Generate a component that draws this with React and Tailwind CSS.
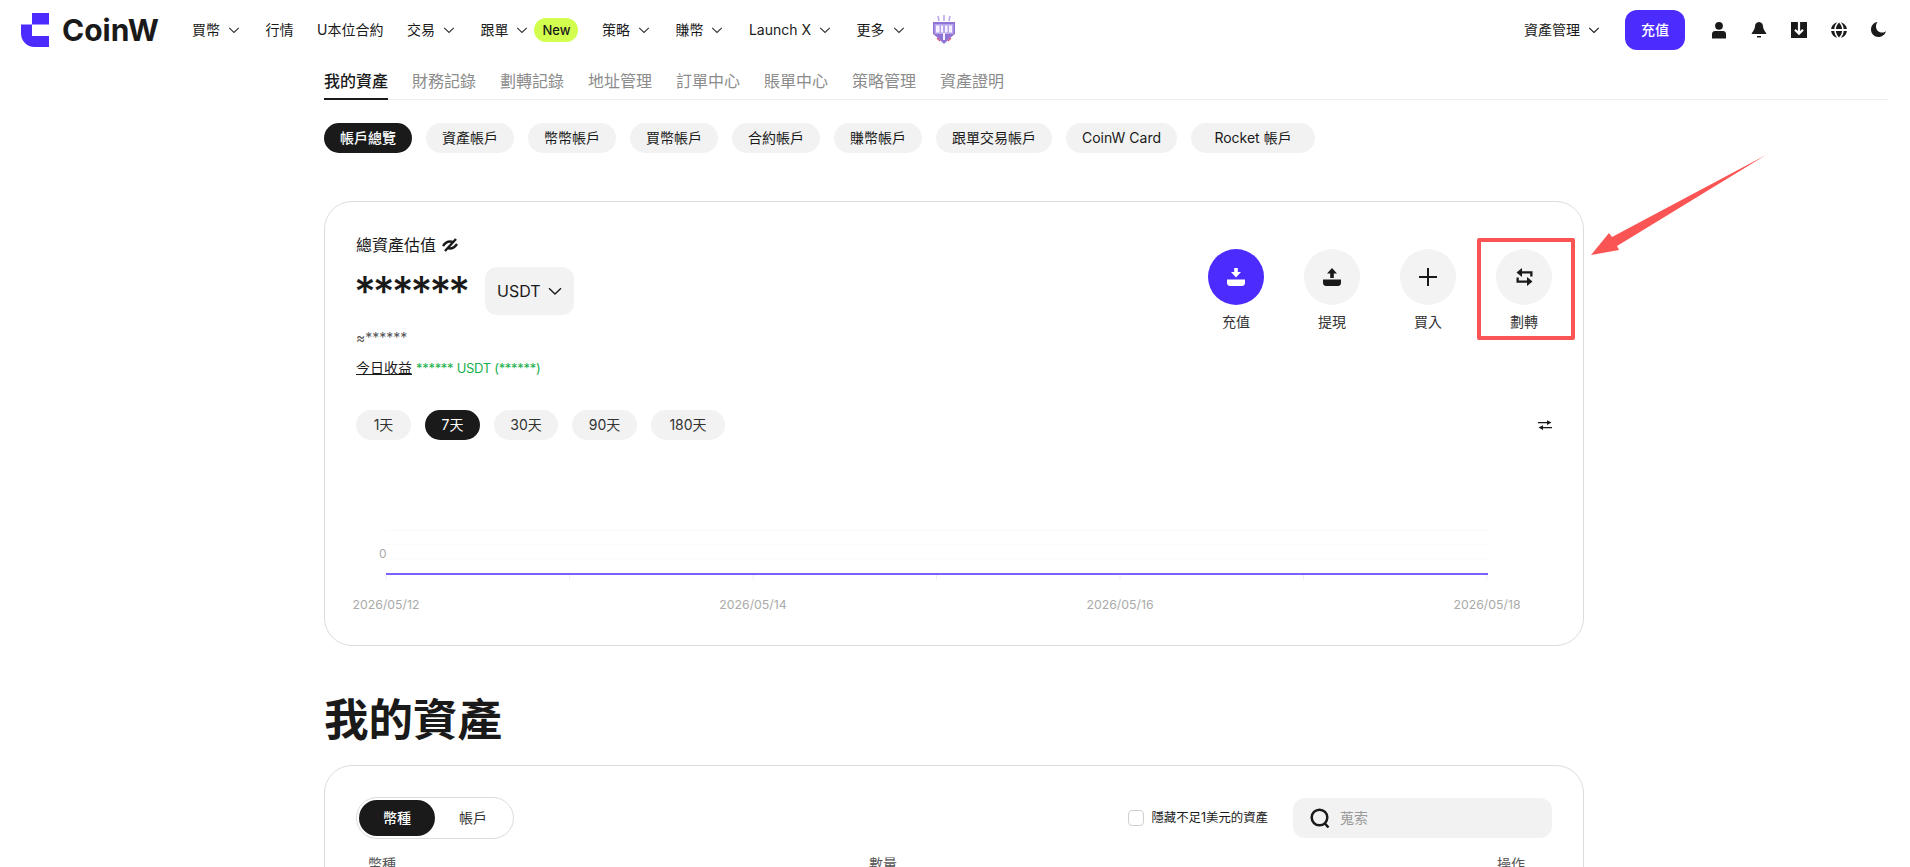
import React from "react";

const FONT = "font-['Inter','Noto_Sans_CJK_TC',sans-serif]";

const Chevron = ({ className = "w-4 h-4" }) => (
  <svg viewBox="0 0 16 16" className={className} fill="none" stroke="currentColor" strokeWidth="1.1">
    <path d="M3.2 5.8 8 10.4l4.8-4.6" />
  </svg>
);

const Logo = () => (
  <svg viewBox="0 0 28 34" className="w-[28px] h-[34px]" fill="#4c2bff">
    <path d="M11 0h17v11.5H11V23h17v11H13.5C6 34 0 28 0 20.5v-9h11z" />
  </svg>
);

// little purple badge next to the nav, it's a picture in the real site
const Emblem = () => (
  <svg viewBox="0 0 28 30" className="w-[28px] h-[30px]">
    <path d="M8 1l1 5M14 0v6M20 1l-1 5" stroke="#b9a5ea" strokeWidth="1.5" />
    <path d="M3 7h22v12l-5 4-6 6-6-6-5-4z" fill="#8f74d6" />
    <path d="M4.500 9h19v10h-19z" fill="#b7a4ea" />
    <path d="M6 10.500h3.500v7H6zM11 10.500h2v7h-2zM15 10.500h2.500v7H15zM19 10.500h3v7h-3z" fill="#f6f2ff" />
    <path d="M7 23l3 3M21 23l-3 3" stroke="#d0487a" strokeWidth="1.2" />
    <path d="M13 18h2v7h-2z" fill="#f6f2ff" />
  </svg>
);

const navItems = [
  { label: "買幣", arrow: true },
  { label: "行情" },
  { label: "U本位合約" },
  { label: "交易", arrow: true },
  { label: "跟單", arrow: true, badge: "New" },
  { label: "策略", arrow: true },
  { label: "賺幣", arrow: true },
  { label: "Launch X", arrow: true },
  { label: "更多", arrow: true },
];

const Header = () => (
  <header className="h-[60px] flex items-center pl-[21px] pr-[22px]">
    <div className="flex items-center gap-[13px] w-[171px]">
      <Logo />
      <span className="text-[30px] font-bold leading-none text-[#1a1a1a]">CoinW</span>
    </div>
    <nav className="flex items-center gap-[23.5px] text-sm text-[#1a1a1a]">
      {navItems.map((item) => (
        <div key={item.label} className="flex items-center">
          <span>{item.label}</span>
          {item.arrow && <Chevron className="w-4 h-4 ml-[6px] text-[#333]" />}
          {item.badge && (
            <span className="ml-[4px] w-[44px] h-[24px] rounded-full bg-[#d2ff4d] text-[13px] font-medium flex items-center justify-center">
              {item.badge}
            </span>
          )}
        </div>
      ))}
      <Emblem />
    </nav>
    <div className="ml-auto flex items-center text-[#1a1a1a]">
      <span className="text-sm">資產管理</span>
      <Chevron className="w-4 h-4 ml-[6px]" />
      <button className="ml-[23px] w-[60px] h-[40px] rounded-[12px] bg-[#4c2bff] text-white text-sm font-medium">充值</button>
      <div className="ml-[25px] flex items-center gap-[22px]">
        <svg viewBox="0 0 18 18" className="w-[18px] h-[18px]" fill="#1a1a1a">
          <circle cx="9" cy="4.800" r="3.900" />
          <path d="M2 13c0-1.700 1.300-3 3-3h8c1.700 0 3 1.300 3 3v4.500H2z" />
        </svg>
        <svg viewBox="0 0 18 18" className="w-[18px] h-[18px]" fill="#1a1a1a">
          <path d="M9 1c2.800 0 4 2.200 4 4.500 0 3 3 5.500 3.500 7.500h-15C2 11 5 8.500 5 5.500 5 3.200 6.200 1 9 1z" />
          <path d="M7 15h4v1.500H7z" />
        </svg>
        <svg viewBox="0 0 18 18" className="w-[18px] h-[18px]">
          <path d="M1 1h16v16H1z" fill="#1a1a1a" />
          <path d="M9 1v11.500M5 8.800l4 4 4-4" fill="none" stroke="#fff" strokeWidth="2.200" />
        </svg>
        <svg viewBox="0 0 18 18" className="w-[18px] h-[18px]" fill="#1a1a1a">
          <path d="M7.200 1.200C4 2 1.500 4.500 1.100 8h3.200c.2-2.700 1.300-5 2.900-6.800zM10.800 1.200C14 2 16.500 4.500 16.900 8h-3.200c-.2-2.700-1.300-5-2.900-6.800zM9 1.500C7.300 3.300 6.100 5.500 5.900 8h6.200C11.900 5.500 10.700 3.300 9 1.500z" />
          <path d="M7.200 16.800C4 16 1.500 13.500 1.100 10h3.200c.2 2.700 1.300 5 2.900 6.800zM10.800 16.800c3.200-.8 5.700-3.300 6.100-6.800h-3.200c-.2 2.700-1.300 5-2.900 6.800zM9 16.500c-1.700-1.800-2.900-4-3.100-6.500h6.200c-.2 2.500-1.400 4.700-3.100 6.500z" />
        </svg>
        <svg viewBox="0 0 18 18" className="w-[18px] h-[18px]" fill="#1a1a1a">
          <path d="M7.500 1C3.800 1.500 1 4.700 1 8.500 1 12.700 4.300 16 8.500 16c3.600 0 6.700-2.500 7.500-6-1 1-2.400 1.600-4 1.600-3.400 0-6-2.600-6-6 0-1.800.6-3.400 1.500-4.600z" />
        </svg>
      </div>
    </div>
  </header>
);

const tabs = ["我的資產", "財務記錄", "劃轉記錄", "地址管理", "訂單中心", "賬單中心", "策略管理", "資產證明"];
const subTabs = ["帳戶總覽", "資產帳戶", "幣幣帳戶", "買幣帳戶", "合約帳戶", "賺幣帳戶", "跟單交易帳戶", "CoinW Card"];
const ranges = [
  { label: "1天", width: "w-[55px]" },
  { label: "7天", width: "w-[55px]" },
  { label: "30天", width: "w-[64px]" },
  { label: "90天", width: "w-[65px]" },
  { label: "180天", width: "w-[74px]" },
];

const DepositIcon = ({ color }) => (
  <svg viewBox="0 0 18 18" className="w-[18px] h-[18px]" fill={color}>
    <path d="M7.200 0h3.600v4H14L9 9.500 4 4h3.200z" />
    <path d="M0 11.500h18v3c0 2-1 3.500-3 3.500H3c-2 0-3-1.500-3-3.500z" />
  </svg>
);

const WithdrawIcon = ({ color }) => (
  <svg viewBox="0 0 18 18" className="w-[18px] h-[18px]" fill={color}>
    <path d="M9 0l5 5.500h-3.200v4.500H7.200V5.500H4z" />
    <path d="M0 11.500h18v3c0 2-1 3.500-3 3.500H3c-2 0-3-1.500-3-3.500z" />
  </svg>
);

const PlusIcon = () => (
  <svg viewBox="0 0 18 18" className="w-[18px] h-[18px]" fill="#1a1a1a">
    <path d="M8 0h2v8h8v2h-8v8H8v-8H0V8h8z" />
  </svg>
);

const TransferIcon = () => (
  <svg viewBox="0 0 17 18" className="w-[17px] h-[18px]" fill="#1a1a1a">
    <path d="M6 0v3.300h10.500v5.200h-2.300V5.600H6V9L.5 4.500zM11 18v-3.300H.5V9.500h2.300v2.900H11V9l5.500 4.500z" />
  </svg>
);

const actions = [
  { label: "充值", icon: <DepositIcon color="#fff" />, main: true },
  { label: "提現", icon: <WithdrawIcon color="#1a1a1a" /> },
  { label: "買入", icon: <PlusIcon /> },
  { label: "劃轉", icon: <TransferIcon /> },
];

const Chart = () => {
  const ticks = [0, 1, 2, 3, 4, 5, 6];
  const labels = [
    { x: 61, text: "2026/05/12" },
    { x: 428, text: "2026/05/14" },
    { x: 795, text: "2026/05/16" },
    { x: 1162, text: "2026/05/18" },
  ];
  return (
    <svg viewBox="0 0 1195 180" className="w-[1195px] h-[180px] block">
      {[90, 104, 119].map((y) => (
        <line key={y} x1="61" x2="1163" y1={y} y2={y} stroke="#fafafa" />
      ))}
      {ticks.map((i) => (
        <line key={i} x1={61 + i * 183.5} x2={61 + i * 183.5} y1="134" y2="140" stroke="#f0f0f0" />
      ))}
      <text x="54" y="118" fontSize="12" fill="#aaaaaa">0</text>
      <line x1="61" x2="1163" y1="134" y2="134" stroke="#4c2bff" strokeWidth="1.500" />
      {labels.map((l) => (
        <text key={l.text} x={l.x} y="169" fontSize="12.300" fill="#aaaaaa" textAnchor="middle">{l.text}</text>
      ))}
    </svg>
  );
};

const OverviewCard = () => (
  <section className="mt-[48px] w-[1260px] h-[445px] border border-[#dcdcdc] rounded-[28px] px-[31px] pt-[31px]">
    <div className="flex justify-between">
      <div>
        <div className="flex items-center gap-[6px] h-[24px] text-base text-[#1a1a1a]">
          <span>總資產估值</span>
          <svg viewBox="0 0 16 16" className="w-4 h-4" fill="none" stroke="#1a1a1a" strokeWidth="2.400">
            <path d="M1 9c2-3 4-4.500 7-4.500 1 0 2 .2 3 .6M15 7c-2 3-4 4.500-7 4.500-1 0-2-.2-3-.6M3 14 14 2" />
          </svg>
        </div>
        <div className="mt-[10px] flex items-start">
          <span className="w-[129px] -ml-[2px] mr-[2px] text-[42px] leading-[50px] font-medium tracking-[-3px] text-[#1a1a1a]">******</span>
          <div className="w-[89px] h-[48px] rounded-[12px] bg-[#f2f2f2] flex items-center pl-[12px] text-base text-[#1a1a1a]">
            USDT
            <Chevron className="w-[20px] h-[20px] ml-[4px]" />
          </div>
        </div>
        <div className="mt-[11px] h-[20px] text-sm leading-5 text-[#555]">≈******</div>
        <div className="mt-[10px] h-[20px] text-sm leading-5">
          <span className="underline text-[#1a1a1a]">今日收益</span>
          <span className="ml-1 text-[13px] tracking-[-0.3px] text-[#17b04b]">****** USDT (******)</span>
        </div>
      </div>
      <div className="flex gap-[40px] pt-[16px]">
        {actions.map((a) => (
          <div key={a.label} className="w-[56px] flex flex-col items-center">
            <div className={`w-[56px] h-[56px] rounded-full flex items-center justify-center ${a.main ? "bg-[#4c2bff]" : "bg-[#f3f3f3]"}`}>
              {a.icon}
            </div>
            <span className="mt-[7px] text-sm leading-5 text-[#333]">{a.label}</span>
          </div>
        ))}
      </div>
    </div>
    <div className="mt-[32px] flex items-center justify-between">
      <div className="flex gap-[14px]">
        {ranges.map((r) => (
          <div
            key={r.label}
            className={`h-[30px] ${r.width} rounded-full flex items-center justify-center text-sm ${r.label === "7天" ? "bg-[#1a1a1a] text-white" : "bg-[#f2f2f2] text-[#333]"}`}
          >
            {r.label}
          </div>
        ))}
      </div>
      <svg viewBox="0 0 14 10" className="w-[14px] h-[10px]" fill="#1a1a1a">
        <path d="M0 2h9v1.200H0zM9 .2 13.500 2.600 9 5zM14 7H5v1.200h9zM5 5.200.5 7.600 5 10z" />
      </svg>
    </div>
    <div className="-ml-[31px]">
      <Chart />
    </div>
  </section>
);

const AssetsCard = () => (
  <section className="mt-[19px] w-[1260px] h-[300px] border border-[#dcdcdc] rounded-[28px] px-[31px] pt-[31px]">
    <div className="flex items-center">
      <div className="w-[158px] h-[42px] rounded-full border border-[#dcdcdc] flex items-center px-[2px] text-sm">
        <div className="w-[76px] h-[36px] rounded-full bg-[#1a1a1a] text-white font-medium flex items-center justify-center">幣種</div>
        <div className="w-[76px] text-center text-[#333]">帳戶</div>
      </div>
      <div className="ml-auto flex items-center">
        <span className="w-4 h-4 rounded-[4px] border border-[#cfcfcf]" />
        <span className="ml-[7px] text-[12.4px] text-[#1a1a1a]">隱藏不足1美元的資產</span>
        <div className="ml-[25px] w-[259px] h-[40px] rounded-[12px] bg-[#f2f2f2] flex items-center pl-[17px]">
          <svg viewBox="0 0 20 20" className="w-[20px] h-[20px]" fill="none" stroke="#1a1a1a" strokeWidth="2.500">
            <circle cx="9.500" cy="9.500" r="7.800" />
            <path d="m14.500 15 4 4.500" />
          </svg>
          <span className="ml-[10px] text-sm text-[#999]">蒐索</span>
        </div>
      </div>
    </div>
    <div className="mt-[15px] px-[12px] flex text-sm text-[#555]">
      <span className="w-[501px]">幣種</span>
      <span>數量</span>
      <span className="ml-auto mr-[15px]">操作</span>
    </div>
  </section>
);

export default function App() {
  return (
    <div className={`relative h-[867px] overflow-hidden bg-white ${FONT}`}>
      <Header />
      <main className="pl-[324px] pr-[22px]">
        <div className="h-[40px] flex gap-[24px] border-b border-[#efefef] text-base">
          {tabs.map((t, i) => (
            <div
              key={t}
              className={`h-[40px] pt-[9px] leading-6 ${i === 0 ? "border-b-2 border-[#1a1a1a] text-[#1a1a1a] font-medium" : "text-[#8c8c8c]"}`}
            >
              {t}
            </div>
          ))}
        </div>
        <div className="mt-[23px] flex gap-[14px]">
          {subTabs.map((t, i) => (
            <div
              key={t}
              className={`h-[30px] px-[16px] rounded-full flex items-center text-sm ${i === 0 ? "bg-[#1a1a1a] text-white font-medium" : "bg-[#f2f2f2] text-[#1a1a1a]"}`}
            >
              {t}
            </div>
          ))}
          <div className="h-[30px] w-[124px] rounded-full flex items-center justify-center text-sm bg-[#f2f2f2] text-[#1a1a1a]">
            Rocket 帳戶
          </div>
        </div>
        <OverviewCard />
        <h2 className="mt-[48px] text-[44.5px] leading-[52px] font-bold text-[#1a1a1a]">我的資產</h2>
        <AssetsCard />
      </main>

      {/* annotation drawn on top of the screenshot */}
      <div className="absolute left-[1477px] top-[238px] w-[98px] h-[102px] border-[4px] border-[#fb5454] rounded-[2px]" />
      <svg className="absolute left-[1585px] top-[150px] w-[185px] h-[110px]" viewBox="0 0 185 110" fill="#fb5454">
        <path d="M181 5 27 87l-3-4L6 105l28-5-2-4z" />
      </svg>
    </div>
  );
}
